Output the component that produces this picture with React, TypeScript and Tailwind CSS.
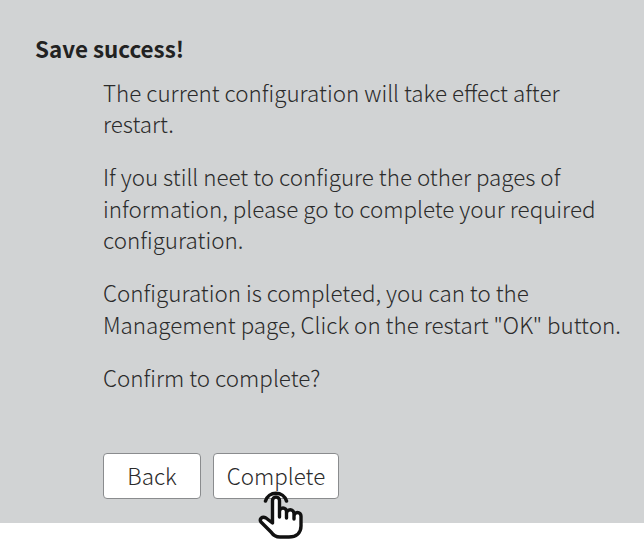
import React from 'react';

const HandCursor: React.FC = () => (
  <svg viewBox="250 480 64 60" className="absolute left-[250px] top-[480px] w-[64px] h-[60px]" fill="none">
    {/* click ripple */}
    <path d="M265.5 501 A11 11 0 0 1 286.5 501" stroke="#111" strokeWidth="3.6" strokeLinecap="round" />
    <path
      d="M272.5 521 V500.5 a3.5 3.5 0 0 1 7 0 V517 V511.5 a3.5 3.5 0 0 1 7 0 V518 V513.5 a3.75 3.75 0 0 1 7.5 0 V519 V516 a3.5 3.5 0 0 1 7 0 V526 c0 7 -5 11 -12 11 h-9 c-4 0 -7 -2 -9 -5 L261 522 c-2 -3 1 -6 5 -4 L272.5 523 Z"
      fill="#fff"
      stroke="#111"
      strokeWidth="3.4"
      strokeLinejoin="round"
      strokeLinecap="round"
    />
  </svg>
);

const App: React.FC = () => {
  return (
    <div className="relative w-[644px] h-[540px] overflow-hidden bg-white font-['Noto_Sans_CJK_SC','Noto_Sans',sans-serif] text-[#2b2b2b]">
      <div className="h-[523px] bg-[#d1d3d4] pl-[35px] pt-[31px]">
        <h3 className="text-[22.4px] leading-[34px] font-bold text-[#222]">Save success!</h3>
        <div className="ml-[68px] mt-[11.5px] w-[525px] text-[22.4px] leading-[31.5px] font-light">
          <p>The current configuration will take effect after restart.</p>
          <p className="mt-[21.5px]">
            If you still neet to configure the other pages of information, please go to complete your required configuration.
          </p>
          <p className="mt-[21.5px]">
            Configuration is completed, you can to the Management page, Click on the restart "OK" button.
          </p>
          <p className="mt-[21.5px]">Confirm to complete?</p>
        </div>
        <div className="ml-[68px] mt-[59.5px] flex gap-[12px]">
          <button className="h-[46px] w-[98px] rounded-[4px] border border-[#8a8c8e] bg-white text-[22.4px] font-light">Back</button>
          <button className="h-[46px] w-[126px] rounded-[4px] border border-[#8a8c8e] bg-white text-[22.4px] font-light">Complete</button>
        </div>
      </div>
      <HandCursor />
    </div>
  );
};

export default App;
